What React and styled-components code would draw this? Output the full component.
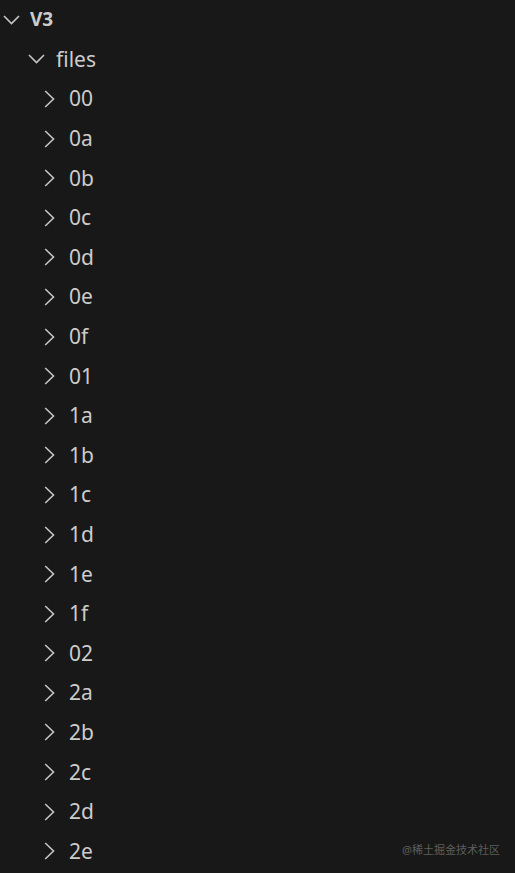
import React from "react";
import styled, { createGlobalStyle } from "styled-components";

const Global = createGlobalStyle`
  html, body { margin: 0; padding: 0; background: #181818; }
  body { width: 515px; height: 873px; overflow: hidden; }
`;

const Panel = styled.div`
  position: relative;
  width: 515px;
  height: 873px;
  background: #181818;
  font-family: "Noto Sans", "Open Sans", sans-serif;
  color: #cccccc;
  overflow: hidden;
`;

const Row = styled.div`
  display: flex;
  align-items: center;
  height: 39.6px;
  padding-left: ${(p) => p.$indent}px;
  box-sizing: border-box;
`;

const Twistie = styled.span`
  display: flex;
  align-items: center;
  justify-content: center;
  width: 20px;
  height: 20px;
  margin-right: ${(p) => p.$gap}px;
  flex: none;
`;

const Label = styled.span`
  font-size: ${(p) => (p.$bold ? 19 : 21)}px;
  font-weight: ${(p) => (p.$bold ? 700 : 400)};
  line-height: 1;
  white-space: nowrap;
`;

const Watermark = styled.div`
  position: absolute;
  right: 15px;
  bottom: 16px;
  font-family: "Noto Sans", "Noto Sans CJK SC", sans-serif;
  font-size: 11px;
  line-height: 15px;
  color: #5e5e5e;
`;

const ChevronDown = () => (
  <svg width="17" height="10" viewBox="0 0 17 10">
    <polyline points="1,1 8.5,8.5 16,1" fill="none" stroke="#c5c5c5" strokeWidth="1.6" />
  </svg>
);

const ChevronRight = () => (
  <svg width="11" height="18" viewBox="0 0 11 18">
    <polyline points="1.2,1 9.5,9 1.2,17" fill="none" stroke="#c5c5c5" strokeWidth="1.6" />
  </svg>
);

const items = [
  "00", "0a", "0b", "0c", "0d", "0e", "0f", "01",
  "1a", "1b", "1c", "1d", "1e", "1f", "02",
  "2a", "2b", "2c", "2d", "2e",
];

export default function App() {
  return (
    <>
      <Global />
      <Panel>
        <Row $indent={1}>
          <Twistie $gap={9}><ChevronDown /></Twistie>
          <Label $bold>V3</Label>
        </Row>
        <Row $indent={26}>
          <Twistie $gap={10}><ChevronDown /></Twistie>
          <Label>files</Label>
        </Row>
        {items.map((name) => (
          <Row key={name} $indent={39}>
            <Twistie $gap={10}><ChevronRight /></Twistie>
            <Label>{name}</Label>
          </Row>
        ))}
        <Watermark>@稀土掘金技术社区</Watermark>
      </Panel>
    </>
  );
}
